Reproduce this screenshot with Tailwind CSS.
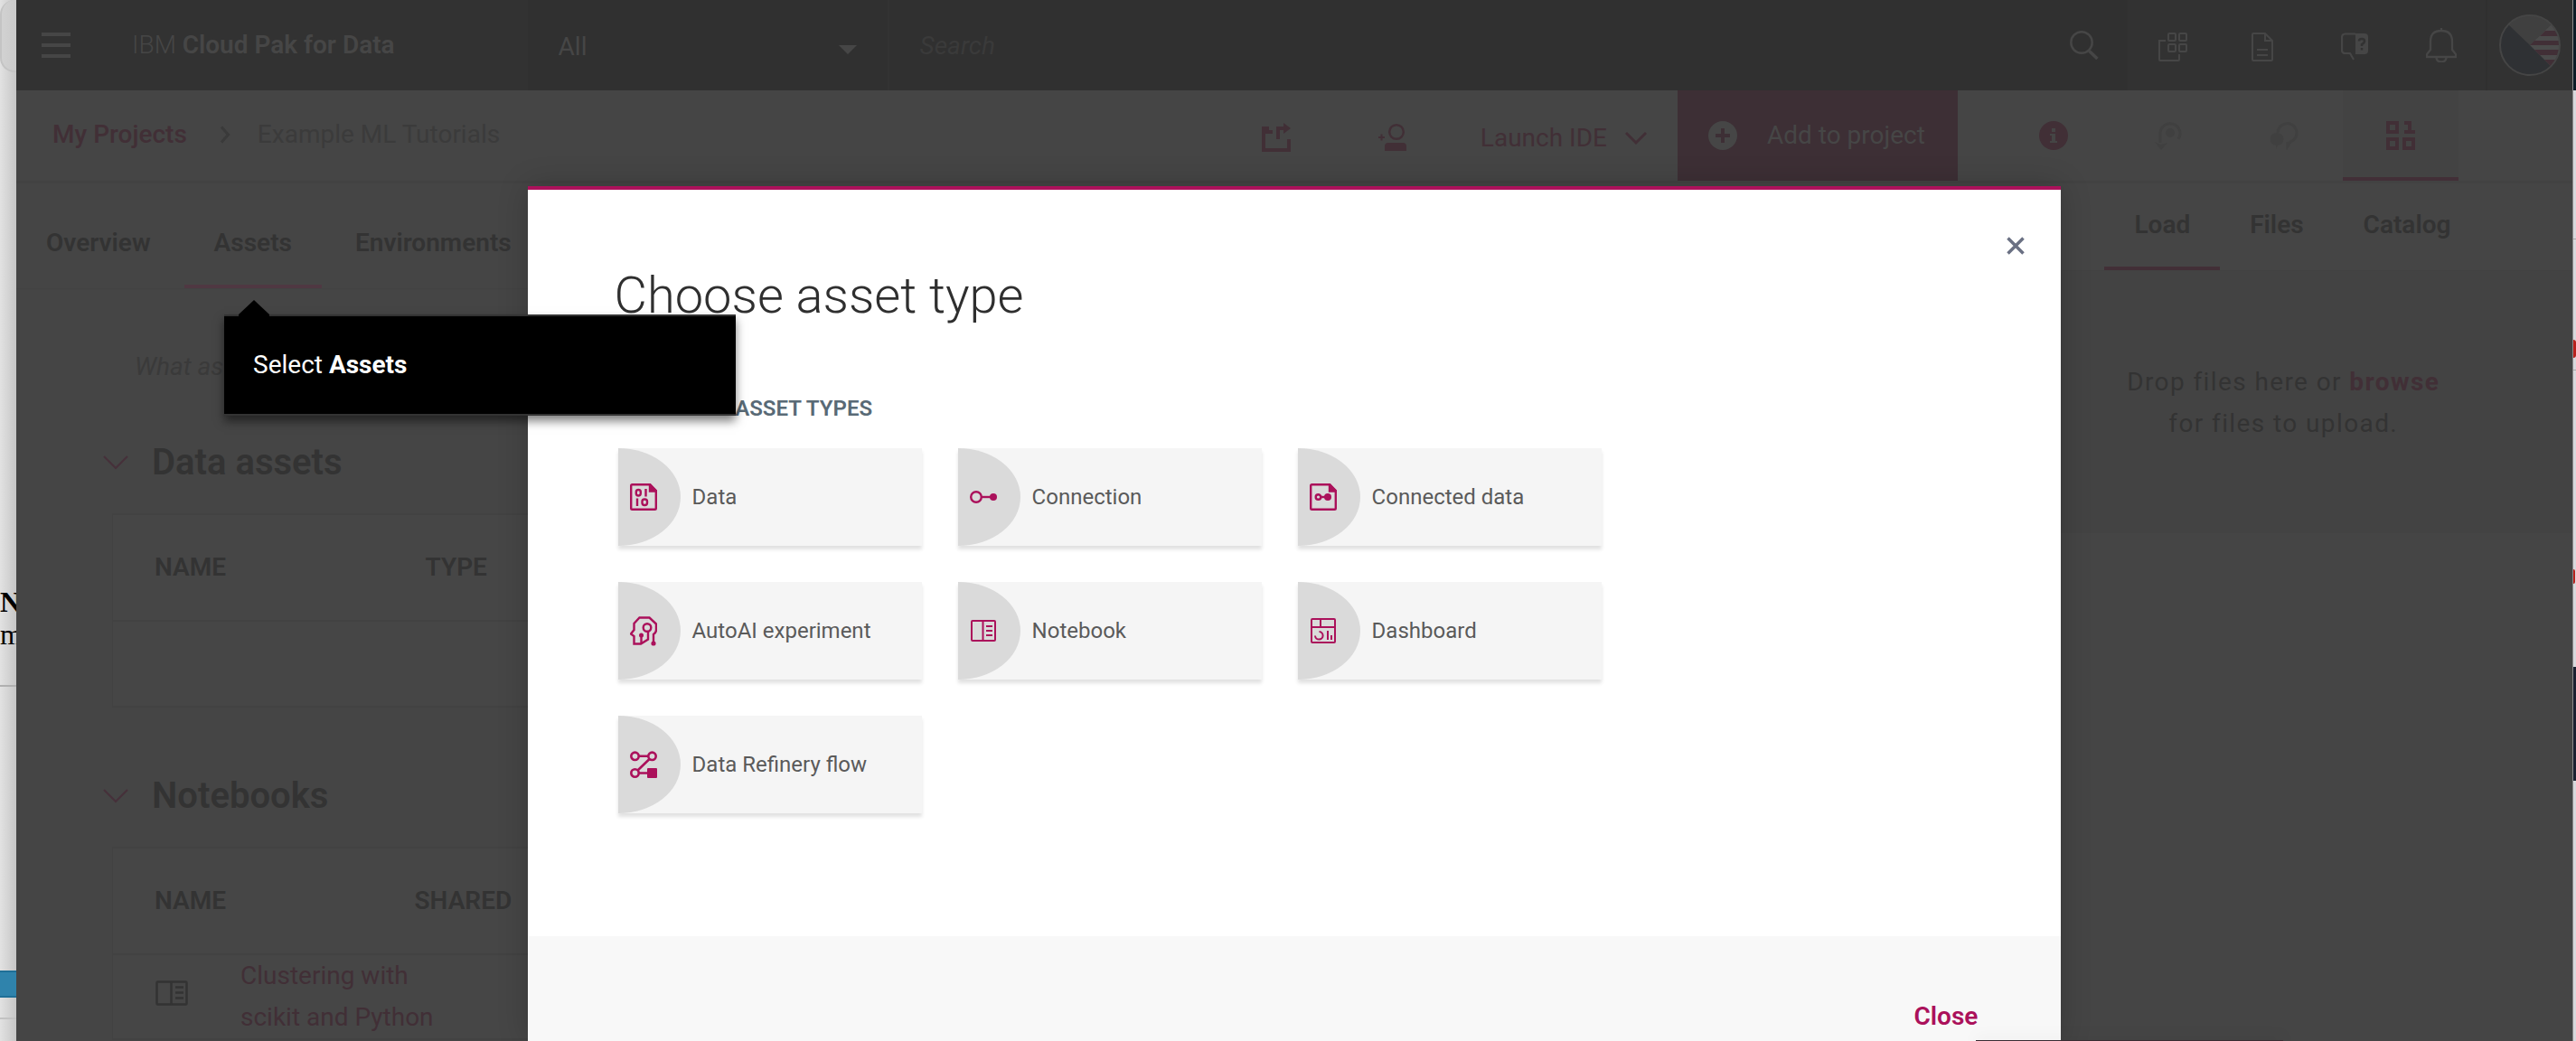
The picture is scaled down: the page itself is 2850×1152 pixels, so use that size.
<!DOCTYPE html>
<html lang="en">
<head>
<meta charset="utf-8">
<meta name="viewport" content="width=device-width, initial-scale=1">
<title>IBM Cloud Pak for Data</title>
<script src="https://cdn.jsdelivr.net/npm/@tailwindcss/browser@4"></script>
</head>
<body class="h-screen overflow-hidden flex bg-[#454545] font-[Roboto,sans-serif] text-[28px] leading-9 text-[#333333]">

<!-- Window behind, left edge -->
<div class="w-[18px] shrink-0 overflow-hidden flex flex-col bg-linear-to-r from-[#e2e2e2] to-[#c6c6c6] font-['Liberation_Serif',serif] text-[32px] text-black">
  <div class="h-20 w-12 shrink-0 rounded-2xl border-2 border-t-0 border-[#c4c4c4] bg-linear-to-r from-[#d2d2d2] to-[#bdbdbd]"></div>
  <div class="mt-[568px] shrink-0 font-bold">N</div>
  <div class="shrink-0">m</div>
  <div class="h-10 shrink-0 border-b-2 border-[#b0b0b0]"></div>
  <div class="mt-[314px] h-[30px] shrink-0 border-y-2 border-[#1f6f97] bg-[#2f83ac]"></div>
  <div class="h-6 shrink-0 border-b-2 border-[#c2c2c2]"></div>
</div>

<!-- Application window -->
<div class="relative flex-1 min-w-0 flex flex-col overflow-hidden bg-[#454545]">

  <header class="h-[100px] shrink-0 flex bg-[#323232] text-[#464646]">
    <div class="w-1/5 shrink-0 flex items-center pl-7">
      <button type="button" aria-label="Menu">
        <svg class="w-8 h-7" viewBox="0 0 32 28" fill="currentColor"><path d="M0 0h32v4H0zM0 12h32v4H0zM0 24h32v4H0z"/></svg>
      </button>
      <a href="#" class="pl-[68px] font-light whitespace-nowrap">IBM <span class="font-semibold">Cloud Pak for Data</span></a>
    </div>
    <div class="relative w-[400px] shrink-0 bg-[#303030] border-r-2 border-[#333333]">
      <select aria-label="Search in" class="appearance-none w-full h-full pl-[34px] pt-1 bg-transparent"><option>All</option></select>
      <svg class="absolute right-[34px] top-[50px] w-5 h-[10px]" viewBox="0 0 20 10" fill="currentColor"><path d="M0 0h20L10 10z"/></svg>
    </div>
    <div class="flex-1 min-w-0 flex items-center bg-[#303030] pr-8">
      <input type="text" aria-label="Search" placeholder="Search" class="flex-1 min-w-0 h-full pl-[34px] bg-transparent italic placeholder:text-[#3a3a3a]">
      <button type="button" aria-label="Run search">
        <svg class="w-8 h-8" viewBox="0 0 32 32" fill="none" stroke="currentColor"><circle cx="13" cy="13" r="11.7" stroke-width="2.5"/><path d="M21.500 22.500 30.500 31" stroke-width="3.500"/></svg>
      </button>
    </div>
    <div class="shrink-0 flex items-center border-r-2 border-[#2f2f2f]">
      <button type="button" aria-label="Services" class="w-[99px] h-full flex items-center justify-center">
        <svg class="w-8 h-8 mt-1" viewBox="0 0 32 32" fill="none" stroke="currentColor" stroke-width="2"><rect x="11" y="1" width="8" height="8" rx="1"/><rect x="23" y="1" width="8" height="8" rx="1"/><rect x="11" y="13" width="8" height="8" rx="1"/><rect x="23" y="13" width="8" height="8" rx="1"/><path d="M8 9H1v21q0 1 1 1h20q1 0 1-1v-6"/></svg>
      </button>
      <button type="button" aria-label="Documents" class="w-[99px] h-full flex items-center justify-center">
        <svg class="w-6 h-8 mt-1" viewBox="0 0 24 32" fill="none" stroke="currentColor" stroke-width="2"><path d="M2 1h13l8 8v21q0 1-1 1H2q-1 0-1-1V2q0-1 1-1zM15 1v8h8M6 19h12M6 25h12"/></svg>
      </button>
      <button type="button" aria-label="Help" class="w-[99px] h-full pl-2 flex items-center justify-center">
        <svg class="w-8 h-8 mt-1" viewBox="0 0 32 32" fill="none" stroke="currentColor"><path d="M16 1.500H5Q1 1.500 1 5.500v14q0 3.500 4 3.500h5l4 7" stroke-width="2.200"/><path d="M16 1h10q4 0 4 4v15q0 4-4 4H16z" fill="currentColor" stroke="none"/><path d="M20 9.500q0-2.500 3-2.500t3 2.500q0 2-3 3.500v2M23 17v2.500" stroke="#323232" stroke-width="2.500"/></svg>
      </button>
      <button type="button" aria-label="Notifications" class="w-[99px] h-full flex items-center justify-center">
        <svg class="w-[34px] h-[38px]" viewBox="0 0 34 38" fill="none" stroke="currentColor" stroke-width="2.300"><path d="M17 0v3M5 24V15Q5 3 17 3t12 12v9l4 5v3H1v-3zM11.500 32q0 5.500 5.500 5.500t5.500-5.500"/></svg>
      </button>
    </div>
    <div class="w-[94px] shrink-0 flex items-center justify-center">
      <button type="button" aria-label="Account">
        <svg class="w-[68px] h-[68px]" viewBox="0 0 68 68"><defs><clipPath id="disc"><circle cx="34" cy="34" r="33"/></clipPath></defs><g clip-path="url(#disc)"><path d="M0 0h68v68H0z" fill="#2f3134"/><path d="M0 0h68v68L11 9z" fill="#404040"/><path d="M11 12 34 34 57 12 60 0H11z" fill="#404040"/><path d="M34 34 57 12h11v56L57 57z" fill="#4b4b4b"/><path d="M51 18h17v6H45zM39 29h29v5H34zM39 39h29v6H45zM50 50h18v7H57z" fill="#412f36"/></g><circle cx="34" cy="34" r="33" fill="none" stroke="#454545" stroke-width="2"/></svg>
      </button>
    </div>
  </header>

  <!-- Breadcrumb and toolbar -->
  <div class="h-[103px] shrink-0 flex border-b-[3px] border-[#424242] text-[#412f36]">
    <nav aria-label="Breadcrumb" class="flex-1 min-w-0 flex items-center pl-10 pb-[2px] whitespace-nowrap">
      <a href="#" class="font-medium">My Projects</a>
      <svg class="w-3 h-5 ml-9 mr-[30px] text-[#3a3a3a]" viewBox="0 0 12 20" fill="none" stroke="currentColor" stroke-width="3"><path d="M2 1.500 9.500 10 2 18.500"/></svg>
      <span class="text-[#3b3b3b]">Example ML Tutorials</span>
    </nav>
    <button type="button" aria-label="Export" class="w-32 shrink-0 flex items-center justify-center">
      <svg class="w-8 h-8 mt-1" viewBox="0 0 32 32" fill="currentColor"><path d="M0 4h8v4h4v4H4v16h24V18h4v14H0zM16 4h8V0l8 6-8 6V8h-4v10h-4z"/></svg>
    </button>
    <button type="button" aria-label="Add collaborator" class="w-32 shrink-0 flex items-center justify-center">
      <svg class="w-8 h-8 mt-1" viewBox="0 0 32 32" fill="currentColor"><circle cx="21" cy="10" r="7.800" fill="none" stroke="currentColor" stroke-width="2.500"/><path d="M8 26q0-4 4-4h16q4 0 4 4v5H8zM1 15h7v2H1z"/><path d="M3.500 12.500h2v7h-2z"/></svg>
    </button>
    <button type="button" class="shrink-0 flex items-center gap-5 px-[34px] pt-[5px]">Launch IDE
      <svg class="w-6 h-4" viewBox="0 0 24 16" fill="none" stroke="currentColor" stroke-width="3"><path d="M1 2l11 11L23 2"/></svg>
    </button>
    <button type="button" class="w-[310px] shrink-0 flex items-center gap-[33px] pl-[34px] bg-[#3d2f35] text-[#464646]">
      <svg class="w-8 h-8" viewBox="0 0 32 32"><circle cx="16" cy="16" r="16" fill="currentColor"/><path d="M8 14h6V8h4v6h6v4h-6v6h-4v-6H8z" fill="#3d2f35"/></svg>
      Add to project
    </button>
    <button type="button" aria-label="Information" class="w-32 ml-[42px] shrink-0 flex items-center justify-center">
      <svg class="w-8 h-8" viewBox="0 0 32 32"><circle cx="16" cy="16" r="16" fill="currentColor"/><path d="M14 8h4v4h-4zM12 14h6v8h2v2h-8v-2h2v-6h-2z" fill="#454545"/></svg>
    </button>
    <button type="button" aria-label="History" class="w-32 shrink-0 flex items-center justify-center text-[#404040]">
      <svg class="w-8 h-8" viewBox="0 0 32 32"><path d="M6 24V13a11 11 0 1 1 20 7" fill="none" stroke="currentColor" stroke-width="3"/><circle cx="17" cy="13" r="5" fill="currentColor"/><path d="M0 23l6 3 8-2-7 8z" fill="currentColor"/></svg>
    </button>
    <button type="button" aria-label="Comments" class="w-32 shrink-0 flex items-center justify-center text-[#404040]">
      <svg class="w-8 h-8" viewBox="0 0 32 32"><path d="M8 13a10.500 10.500 0 1 1 14 10l-3 5v-5" fill="none" stroke="currentColor" stroke-width="3"/><path d="M7 13a7 7 0 1 1 1 14l-2 4v-4A7 7 0 0 1 7 13z" fill="currentColor"/></svg>
    </button>
    <button type="button" aria-label="Find and add data" class="w-32 mr-[126px] shrink-0 flex items-center justify-center border-b-4 pt-1 border-[#422f37] bg-[#434343]">
      <svg class="w-8 h-8" viewBox="0 0 32 32" fill="currentColor"><path fill-rule="evenodd" d="M0 0h14v14H0zM4 4v6h6V4zM0 18h14v14H0zM4 22v6h6v-6zM18 18h14v14H18zM22 22v6h6v-6zM20 0h8v10h4v4H20v-4h4V4h-4z"/></svg>
    </button>
  </div>

  <div class="flex-1 min-h-0 flex">
    <main class="flex-1 min-w-0 flex flex-col">
      <nav aria-label="Project" class="h-[117px] shrink-0 flex gap-1 border-b border-[#424242] font-semibold">
        <a href="#" class="px-[33px] pt-12">Overview</a>
        <a href="#" aria-current="page" class="px-[33px] pt-12 border-b-4 border-[#4f3842]">Assets</a>
        <a href="#" class="px-[33px] pt-12">Environments</a>
      </nav>
      <div class="h-[172px] shrink-0 flex items-center">
        <input type="text" aria-label="Find assets" placeholder="What assets are you looking for?" class="w-[440px] ml-[131px] bg-transparent italic placeholder:text-[#3a3a3a]">
      </div>

      <section class="pl-[102px] pb-[78px] shrink-0">
        <h2 class="flex items-center text-[40px] leading-10 font-semibold">
          <button type="button" aria-label="Collapse data assets" class="w-12 -ml-[6px] shrink-0"><svg class="w-7 h-4" viewBox="0 0 28 16" fill="none" stroke="#46303a" stroke-width="2"><path d="M1 1l13 13L27 1"/></svg></button>
          <span class="pl-[6px]">Data assets</span>
        </h2>
        <div class="mt-9 pl-1">
          <table class="w-full table-fixed border-y-2 border-l border-[#424242] bg-[#464646] text-left">
            <thead><tr class="h-[118px] border-b-2 border-[#424242]"><th class="w-[346px] pl-[46px] font-semibold">NAME</th><th class="font-semibold">TYPE</th></tr></thead>
            <tbody><tr class="h-[95px]"><td></td><td></td></tr></tbody>
          </table>
        </div>
      </section>

      <section class="pl-[102px] shrink-0">
        <h2 class="flex items-center text-[40px] leading-10 font-semibold">
          <button type="button" aria-label="Collapse notebooks" class="w-12 -ml-[6px] shrink-0"><svg class="w-7 h-4" viewBox="0 0 28 16" fill="none" stroke="#46303a" stroke-width="2"><path d="M1 1l13 13L27 1"/></svg></button>
          <span class="pl-[6px]">Notebooks</span>
        </h2>
        <div class="mt-9 pl-1">
          <table class="w-full table-fixed border-y-2 border-l border-[#424242] bg-[#464646] text-left">
            <thead><tr class="h-[118px] border-b-2 border-[#424242]"><th class="w-[334px] pl-[46px] font-semibold">NAME</th><th class="font-semibold">SHARED</th></tr></thead>
            <tbody><tr class="h-[94px]"><td class="pl-[47px]">
              <div class="flex items-start gap-[58px] whitespace-nowrap leading-[46px] text-[#412f36]">
                <svg class="w-9 h-7 mt-7 shrink-0" viewBox="0 0 36 28" fill="none" stroke="#333333" stroke-width="2.500"><rect x="1.500" y="1.500" width="33" height="25" rx="1"/><path d="M17.500 1v26M22 7.500h9M22 13.500h9M22 19.500h9"/></svg>
                <a href="#">Clustering with<br>scikit and Python</a>
              </div></td><td></td></tr></tbody>
          </table>
        </div>
      </section>
    </main>

    <!-- Data panel -->
    <aside class="w-1/5 shrink-0">
      <nav aria-label="Data" class="h-[97px] flex pl-12 border-b border-[#424242] font-semibold">
        <a href="#" aria-current="page" class="px-[33px] pt-7 border-b-4 border-[#422f37]">Load</a>
        <a href="#" class="px-[33px] pt-7">Files</a>
        <a href="#" class="px-[33px] pt-7">Catalog</a>
      </nav>
      <div class="h-[290px] bg-[#434343] pt-[100px] pr-[74px] text-center leading-[46px] tracking-wider">
        <p>Drop files here or <a href="#" class="font-bold text-[#412f36]">browse</a><br>for files to upload.</p>
      </div>
    </aside>
  </div>

  <!-- Choose asset type dialog -->
  <div class="absolute inset-0 flex justify-center pt-[206px]">
    <div role="dialog" aria-labelledby="dialog-title" class="relative w-3/5 flex flex-col border-t-4 border-[#ab115b] bg-white shadow-[0_0_32px_rgba(0,0,0,0.2)]">
      <button type="button" aria-label="Close dialog" class="absolute top-[52px] right-10 text-[#6a7083]">
        <svg class="w-5 h-5" viewBox="0 0 20 20" fill="none" stroke="currentColor" stroke-width="3.500"><path d="M1.500 1.500l17 17M18.500 1.500l-17 17"/></svg>
      </button>
      <div class="px-24 pt-[85px] pb-[136px]">
        <h1 id="dialog-title" class="text-[56px] leading-16 font-light text-[#2f2f2f]">Choose asset type</h1>
        <div class="pl-1">
          <h2 class="pt-[77px] text-2xl font-semibold text-[#596a76]">AVAILABLE ASSET TYPES</h2>
          <div class="mt-7 grid grid-cols-[repeat(3,336px)] auto-rows-[108px] gap-10 text-2xl text-[#5a5a5a]">
            <button type="button" class="flex items-center bg-[#f5f5f5] shadow-[0_4px_4px_rgba(0,0,0,0.12)]">
              <span class="w-[69px] h-full pl-[13px] mr-[13px] flex items-center rounded-[0_100%_100%_0/0_50%_50%_0] bg-[#dadada]"><svg class="w-[30px] h-[30px]" viewBox="0 0 30 30" fill="none" stroke="#ab115b" stroke-width="2.400"><path d="M2.500 1.200H22l6.800 6.800v19.500q0 1.300-1.300 1.300h-25q-1.300 0-1.300-1.300v-25q0-1.300 1.300-1.300z"/><path d="M22 1v7.500h7z" fill="#ab115b"/><rect x="6.800" y="7" width="5" height="6.500" rx="2.500"/><path d="M17.500 6v8.500M8 16.500V25"/><rect x="13.500" y="17.500" width="5.500" height="6.500" rx="2.500"/></svg></span>
              Data
            </button>
            <button type="button" class="flex items-center bg-[#f5f5f5] shadow-[0_4px_4px_rgba(0,0,0,0.12)]">
              <span class="w-[69px] h-full pl-[13px] mr-[13px] flex items-center rounded-[0_100%_100%_0/0_50%_50%_0] bg-[#dadada]"><svg class="w-[30px] h-[30px]" viewBox="0 0 30 30" fill="none" stroke="#ab115b" stroke-width="2.400"><circle cx="7" cy="15" r="5.800"/><path d="M13 15h11"/><circle cx="26" cy="15" r="4" fill="#ab115b" stroke="none"/></svg></span>
              Connection
            </button>
            <button type="button" class="flex items-center bg-[#f5f5f5] shadow-[0_4px_4px_rgba(0,0,0,0.12)]">
              <span class="w-[69px] h-full pl-[13px] mr-[13px] flex items-center rounded-[0_100%_100%_0/0_50%_50%_0] bg-[#dadada]"><svg class="w-[30px] h-[30px]" viewBox="0 0 30 30" fill="none" stroke="#ab115b" stroke-width="2.400"><path d="M2.500 1.200H22l6.800 6.800v19.500q0 1.300-1.300 1.300h-25q-1.300 0-1.300-1.300v-25q0-1.300 1.300-1.300z"/><path d="M22 1v7.500h7z" fill="#ab115b"/><circle cx="9.500" cy="15" r="2.800"/><path d="M12 15h6"/><circle cx="20" cy="15" r="4" fill="#ab115b" stroke="none"/></svg></span>
              Connected data
            </button>
            <button type="button" class="flex items-center bg-[#f5f5f5] shadow-[0_4px_4px_rgba(0,0,0,0.12)]">
              <span class="w-[69px] h-full pl-[13px] mr-[13px] flex items-center rounded-[0_100%_100%_0/0_50%_50%_0] bg-[#dadada]"><svg class="w-[30px] h-[34px]" viewBox="0 0 30 34" fill="none" stroke="#ab115b" stroke-width="2.400"><path d="M26 30V21q3-2 3-5V9.500L21.500 2.500h-11L4.500 9v7L1 20.500 4.500 23v8.500H12l8-5V18"/><circle cx="19" cy="13.500" r="4.300"/><path d="M12.500 31v-9"/><circle cx="12.500" cy="22" r="2.500" fill="#ab115b" stroke="none"/><circle cx="26" cy="31" r="2.600" fill="#ab115b" stroke="none"/></svg></span>
              AutoAI experiment
            </button>
            <button type="button" class="flex items-center bg-[#f5f5f5] shadow-[0_4px_4px_rgba(0,0,0,0.12)]">
              <span class="w-[69px] h-full pl-[14px] mr-[13px] flex items-center rounded-[0_100%_100%_0/0_50%_50%_0] bg-[#dadada]"><svg class="w-7 h-[26px]" viewBox="0 0 28 26" fill="none" stroke="#ab115b" stroke-width="2"><rect x="1" y="2" width="26" height="22" rx="1"/><path d="M13.500 2v22M17 8h7M17 13h7M17 18h7"/></svg></span>
              Notebook
            </button>
            <button type="button" class="flex items-center bg-[#f5f5f5] shadow-[0_4px_4px_rgba(0,0,0,0.12)]">
              <span class="w-[69px] h-full pl-[14px] mr-[13px] flex items-center rounded-[0_100%_100%_0/0_50%_50%_0] bg-[#dadada]"><svg class="w-7 h-7" viewBox="0 0 28 28" fill="none" stroke="#ab115b" stroke-width="2"><rect x="1" y="1" width="26" height="26" rx="1"/><path d="M1 10h26M11 1v9M9.500 15a4.300 4.300 0 1 1-4.500 4.500M19 14v10M23 19v5"/></svg></span>
              Dashboard
            </button>
            <button type="button" class="flex items-center bg-[#f5f5f5] shadow-[0_4px_4px_rgba(0,0,0,0.12)]">
              <span class="w-[69px] h-full pl-[13px] mr-[13px] flex items-center rounded-[0_100%_100%_0/0_50%_50%_0] bg-[#dadada]"><svg class="w-[30px] h-[30px]" viewBox="0 0 30 30" fill="none" stroke="#ab115b" stroke-width="2.600"><circle cx="5.500" cy="5.800" r="4.200"/><circle cx="24.500" cy="5.800" r="4.200"/><circle cx="5.500" cy="24.500" r="4.200"/><path d="M10 5.800h10M21.500 9 8.500 21.500M10 24.500h10"/><rect x="19" y="19" width="11" height="11" rx="1" fill="#ab115b" stroke="none"/></svg></span>
              Data Refinery flow
            </button>
          </div>
        </div>
      </div>
      <footer class="flex-1 flex items-start justify-end bg-[#f8f8f8] pt-[71px] pr-[92px]">
        <button type="button" class="font-semibold text-[#ab115b]">Close</button>
      </footer>
    </div>
  </div>

  <!-- Step tooltip pointing at the Assets tab -->
  <div role="tooltip" class="absolute left-[230px] top-[348px] w-[566px] h-[112px] flex items-center border-y-2 border-[#333333] bg-black pl-8 text-white shadow-[0_6px_10px_rgba(0,0,0,0.5)]">
    <svg class="absolute left-4 -top-[18px] w-[34px] h-[18px]" viewBox="0 0 34 18"><path d="M17 0 34 16v2H0v-2z" fill="#000"/></svg>
    <p>Select <strong>Assets</strong></p>
  </div>

  <!-- Top edge of the notice below the fold -->
  <div class="absolute bottom-0 right-[320px] w-[340px] h-px bg-[#3a2c33] shadow-[0_0_16px_rgba(0,0,0,0.35)]"></div>
</div>

<!-- Window behind, right edge -->
<div class="w-1 shrink-0 flex flex-col border-l border-[#8a8a8a] bg-[#d8d8dc]">
  <div class="h-[100px] shrink-0 bg-[#0c1c26]"></div>
  <div class="h-[165px] shrink-0 border-b border-[#a8a8a8]"></div>
  <div class="mt-[111px] h-5 shrink-0 rounded-r-full bg-[#b8201c]"></div>
  <div class="h-[14px] shrink-0 border-b border-[#a8a8a8]"></div>
  <div class="mt-[220px] h-4 w-[2px] shrink-0 rounded-r-full bg-[#b8201c]"></div>
  <div class="mt-[92px] h-[126px] shrink-0 bg-[#1b2131]"></div>
</div>
</body>
</html>
